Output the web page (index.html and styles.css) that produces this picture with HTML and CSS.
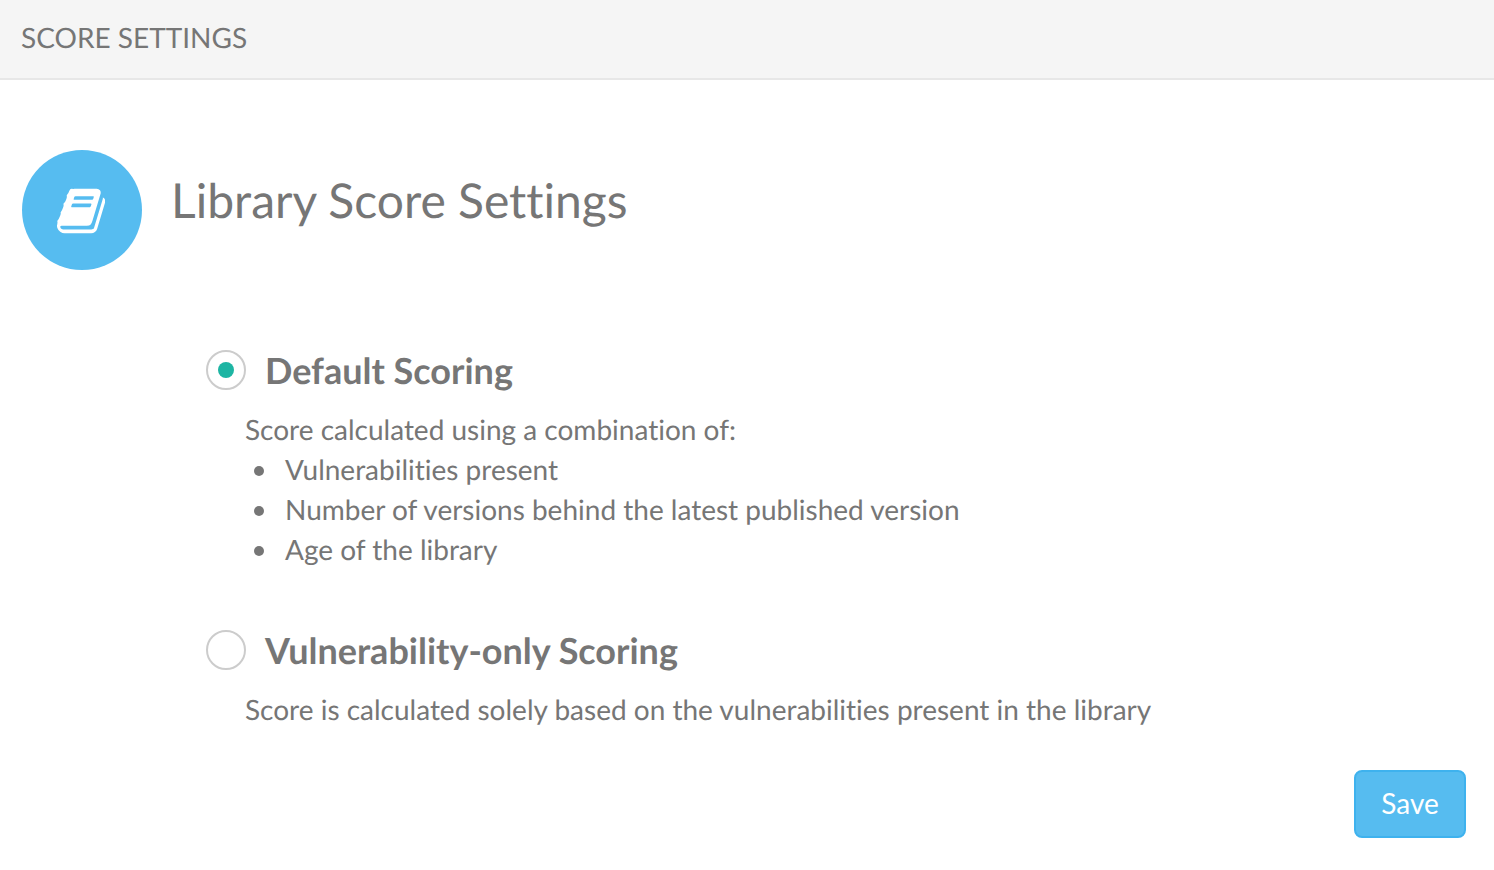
FILE: index.html
```html
<!DOCTYPE html>
<html lang="en">
<head>
<meta charset="utf-8">
<meta name="viewport" content="width=device-width, initial-scale=1">
<title>Score Settings</title>
<link rel="stylesheet" href="styles.css">
</head>
<body>
<header class="topbar">
  <h1 class="topbar-title">SCORE SETTINGS</h1>
</header>
<main class="panel">
  <div class="section-head">
    <span class="badge">
      <svg class="badge-icon" viewBox="0 0 1664 1792" aria-hidden="true"><path d="M1639 478q40 57 18 129l-275 906q-19 64-76.500 107.500t-122.500 43.500h-923q-77 0-148.500-53.500t-99.500-131.500q-24-67-2-127 0-4 3-27t4-37q1-8-3-21.500t-3-19.500q2-11 8-21t16.500-23.500 16.500-23.500q23-38 45-91.500t30-91.500q3-10 .5-30t-.5-28q3-11 17-28t17-23q21-36 42-92t25-90q1-9-2.500-32t.5-28q4-13 22-30.500t22-22.500q19-26 42.500-84.500t27.500-96.500q1-8-3-25.500t-2-26.500q2-8 9-18t18-23 17-21q8-12 16.500-30.500t15-35 16-36 19.500-32 26.500-23.500 36-11.500 47.500 5.500l-1 3q38-9 51-9h761q74 0 114 56t18 130l-274 906q-36 119-71.500 153.500t-128.500 34.500h-869q-27 0-38 15-11 16-1 43 24 70 144 70h923q29 0 56-15.500t35-41.500l300-987q7-22 5-57 38 15 59 43zm-1064 2q-4 13 2 22.500t20 9.500h608q13 0 25.500-9.500t16.500-22.500l21-64q4-13-2-22.500t-20-9.500h-608q-13 0-25.500 9.500t-16.500 22.500zm-83 256q-4 13 2 22.500t20 9.500h608q13 0 25.500-9.500t16.500-22.500l21-64q4-13-2-22.500t-20-9.500h-608q-13 0-25.500 9.500t-16.500 22.500z"/></svg>
    </span>
    <h2 class="section-title">Library Score Settings</h2>
  </div>
  <form class="form">
    <div class="options">
      <div class="option">
        <div class="option-head">
          <input class="radio" type="radio" name="scoring" id="scoring-default" checked>
          <label class="option-label" for="scoring-default">Default Scoring</label>
        </div>
        <div class="option-body">
          <p class="text">Score calculated using a combination of:</p>
          <ul class="list">
            <li class="list-item">Vulnerabilities present</li>
            <li class="list-item">Number of versions behind the latest published version</li>
            <li class="list-item">Age of the library</li>
          </ul>
        </div>
      </div>
      <div class="option">
        <div class="option-head">
          <input class="radio" type="radio" name="scoring" id="scoring-vuln">
          <label class="option-label" for="scoring-vuln">Vulnerability-only Scoring</label>
        </div>
        <div class="option-body">
          <p class="text">Score is calculated solely based on the vulnerabilities present in the library</p>
        </div>
      </div>
    </div>
    <div class="actions">
      <button class="save" type="button">Save</button>
    </div>
  </form>
</main>
</body>
</html>
```

FILE: styles.css
```css
* {
  box-sizing: border-box;
}

body {
  margin: 0;
  background: #fff;
  color: #767676;
  font-family: Lato, "Open Sans", sans-serif;
  font-size: 28px;
  line-height: 40px;
  font-variant-ligatures: none;
  text-rendering: geometricPrecision;
}

h1,
h2,
p,
ul {
  margin: 0;
  font-weight: 400;
}

.topbar {
  padding: 17px 21px 21px;
  background: #f5f5f5;
  border-bottom: 2px solid #e7e7e7;
}

.topbar-title {
  font-size: 28px;
  line-height: 40px;
}

.panel {
  padding: 70px 28px 32px 22px;
}

.section-head {
  display: flex;
  align-items: flex-start;
  gap: 29px;
}

.badge {
  display: flex;
  flex: none;
  align-items: center;
  justify-content: center;
  width: 120px;
  height: 120px;
  padding: 2px 2px 0 0;
  border-radius: 50%;
  background: #56bcf0;
}

.badge-icon {
  height: 52px;
  fill: #fff;
}

.section-title {
  padding-top: 21px;
  font-size: 48px;
  line-height: 60px;
}

.options {
  display: flex;
  flex-direction: column;
  gap: 61px;
  padding: 80px 0 0 184px;
}

.option-head {
  display: flex;
  align-items: center;
  gap: 19px;
}

.radio {
  appearance: none;
  display: grid;
  flex: none;
  place-items: center;
  width: 40px;
  height: 40px;
  margin: 0;
  border: 2px solid #ccc;
  border-radius: 50%;
  background: #fff;
}

.radio:checked::before {
  content: "";
  width: 16px;
  height: 16px;
  border-radius: 50%;
  background: #1db5a3;
}

.option-label {
  font-size: 36px;
  font-weight: 700;
}

.option-body {
  padding: 19px 0 0 39px;
}

.list {
  padding-left: 9px;
  list-style: none;
}

.list-item {
  display: flex;
  align-items: center;
  gap: 21px;
}

.list-item::before {
  content: "";
  flex: none;
  width: 10px;
  height: 10px;
  margin-top: 3px;
  border-radius: 50%;
  background: currentColor;
}

.actions {
  display: flex;
  justify-content: flex-end;
  padding-top: 41px;
}

.save {
  min-width: 112px;
  padding: 11px 24px 13px;
  border: 2px solid #3eb2ee;
  border-radius: 8px;
  background: #56bcf0;
  color: #fff;
  font: inherit;
}
```
